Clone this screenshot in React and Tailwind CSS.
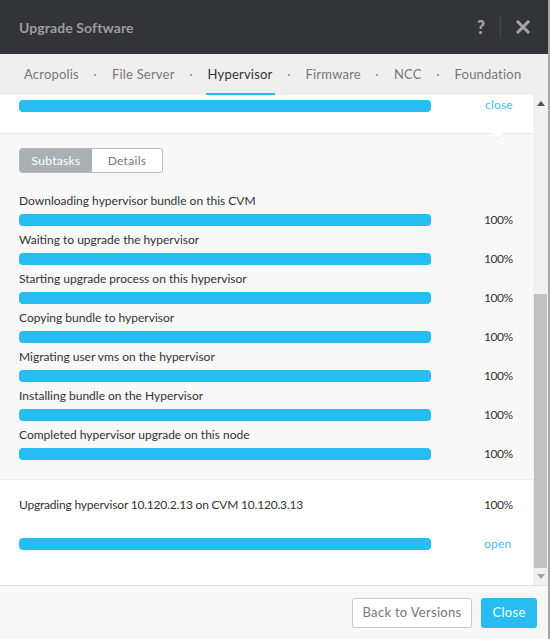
import React from "react";

const font = { fontFamily: "Lato, 'Open Sans', sans-serif" };

const tabs = ["Acropolis", "File Server", "Hypervisor", "Firmware", "NCC", "Foundation"];
const subtasks = [
  "Downloading hypervisor bundle on this CVM",
  "Waiting to upgrade the hypervisor",
  "Starting upgrade process on this hypervisor",
  "Copying bundle to hypervisor",
  "Migrating user vms on the hypervisor",
  "Installing bundle on the Hypervisor",
  "Completed hypervisor upgrade on this node",
];

function Bar() {
  return <div className="h-[12px] w-[412px] shrink-0 rounded-[4px] bg-[#27bdf0]" />;
}

export default function App() {
  return (
    <div className="flex h-[639px] w-[550px] flex-col overflow-hidden border-r-2 border-[#a8a8a8] bg-white" style={font}>
      {/* Header */}
      <div className="flex h-[54px] shrink-0 items-center bg-[#333437] pl-[19px] pr-[18px]">
        <div className="text-[14px] font-bold tracking-[0.1px] text-[#9d9d9d]">Upgrade Software</div>
        <div className="ml-auto flex items-center">
          <span className="text-[18px] font-black text-[#a5a5a5]">?</span>
          <div className="mx-[15px] h-[22px] w-px bg-[#474749]" />
          <svg width="14" height="14" viewBox="0 0 14 14">
            <path d="M2 2 L12 12 M12 2 L2 12" stroke="#a5a5a5" strokeWidth="3" strokeLinecap="square" />
          </svg>
        </div>
      </div>

      {/* Tabs */}
      <div className="flex h-[41px] shrink-0 items-stretch bg-[#efefef] pl-[22px]">
        {tabs.map((t, i) => (
          <React.Fragment key={t}>
            {i > 0 && (
              <div className="flex w-[29px] shrink-0 items-center justify-center">
                <div className="h-[2px] w-[2px] rounded-full bg-[#8a8a8a]" />
              </div>
            )}
            <div
              className={
                "flex shrink-0 items-center whitespace-nowrap border-b-2 px-[2px] pt-[2px] text-[13px] tracking-[0.2px] " +
                (t === "Hypervisor" ? "border-[#27bdf0] text-[#333]" : "border-transparent text-[#777]")
              }
            >
              {t}
            </div>
          </React.Fragment>
        ))}
      </div>

      {/* Scroll area */}
      <div className="flex h-[490px] shrink-0">
        <div className="flex w-[533px] flex-col">
          {/* top white section */}
          <div className="relative flex h-[39px] shrink-0 items-start border-b border-[#ebebeb] bg-white pl-[19px] pt-[5px]">
            <Bar />
            <span className="ml-[54px] mt-[-4px] text-[12px] tracking-[0.2px] text-[#3fbfef]">close</span>
            <div className="absolute bottom-[-5px] left-[494px] h-[8px] w-[8px] rotate-45 border-b border-r border-[#ebebeb] bg-white" />
          </div>

          {/* subtasks section */}
          <div className="flex h-[346px] shrink-0 flex-col border-b border-[#ececec] bg-[#f8f8f8] pl-[19px] pt-[14px]">
            <div className="flex h-[25px] w-[144px] overflow-hidden rounded-[3px] border border-[#b4babd] text-[12px]">
              <div className="flex w-[72px] items-center justify-center bg-[#aab1b5] tracking-[0.3px] text-white">Subtasks</div>
              <div className="flex flex-1 items-center justify-center bg-white tracking-[0.3px] text-[#777]">Details</div>
            </div>
            <div className="mt-[20px] flex flex-col">
              {subtasks.map((s) => (
                <div key={s} className="flex h-[39px] flex-col">
                  <div className="h-[16px] text-[12px] leading-[16px] text-[#333]">{s}</div>
                  <div className="mt-[2px] flex items-center">
                    <Bar />
                    <span className="ml-[53px] text-[12px] tracking-[-0.5px] text-[#333]">100%</span>
                  </div>
                </div>
              ))}
            </div>
          </div>

          {/* bottom white section */}
          <div className="flex flex-1 flex-col bg-white pl-[19px] pt-[17px]">
            <div className="flex h-[16px] items-center">
              <span className="w-[465px] text-[12px] tracking-[-0.2px] text-[#333]">Upgrading hypervisor 10.120.2.13 on CVM 10.120.3.13</span>
              <span className="text-[12px] tracking-[-0.5px] text-[#333]">100%</span>
            </div>
            <div className="mt-[22px] flex items-center">
              <Bar />
              <span className="ml-[53px] text-[12px] tracking-[0.2px] text-[#3fbfef]">open</span>
            </div>
          </div>
        </div>

        {/* scrollbar */}
        <div className="flex w-[15px] flex-col bg-[#f0f0f0]">
          <div className="flex h-[17px] items-center justify-center">
            <svg width="8" height="5" viewBox="0 0 8 5"><path d="M0 5 L4 0 L8 5 Z" fill="#505050" /></svg>
          </div>
          <div className="flex-1" />
          <div className="mx-[1px] h-[274px] bg-[#c1c1c1]" />
          <div className="flex h-[17px] items-center justify-center">
            <svg width="8" height="5" viewBox="0 0 8 5"><path d="M0 0 L4 5 L8 0 Z" fill="#a3a3a3" /></svg>
          </div>
        </div>
      </div>

      {/* Footer */}
      <div className="flex flex-1 items-center justify-end gap-[9px] border-t border-[#e2e2e2] bg-[#f7f7f7] pr-[11px]">
        <button className="h-[30px] w-[120px] rounded-[3px] border border-[#c8c8c8] bg-white text-[13px] tracking-[0.3px] text-[#777]">
          Back to Versions
        </button>
        <button className="h-[30px] w-[56px] rounded-[3px] bg-[#27bdf0] text-[13px] tracking-[0.3px] text-white">Close</button>
      </div>
    </div>
  );
}
